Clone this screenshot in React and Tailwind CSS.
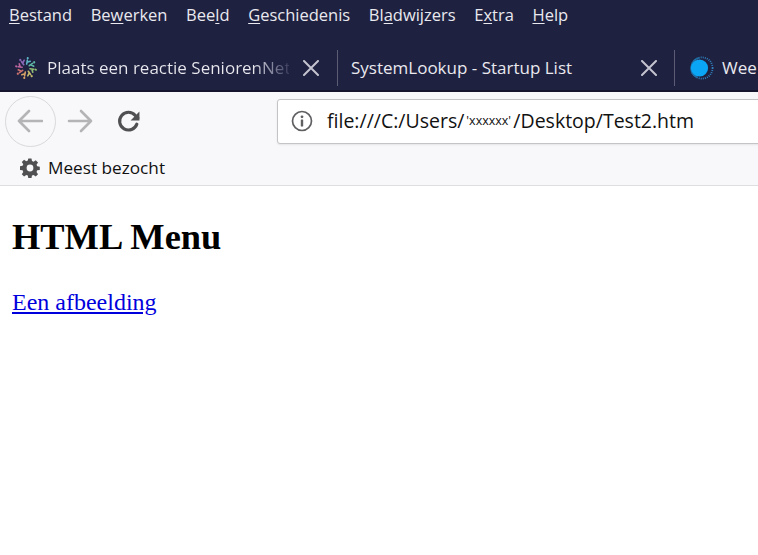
import React from 'react';

const UI_FONT = "font-['Noto_Sans',sans-serif]";

// Menu labels, with the access key underlined
const MENU = [
  ['', 'B', 'estand'],
  ['Be', 'w', 'erken'],
  ['Bee', 'l', 'd'],
  ['', 'G', 'eschiedenis'],
  ['Bl', 'a', 'dwijzers'],
  ['E', 'x', 'tra'],
  ['', 'H', 'elp'],
];

const CloseIcon = () => (
  <svg width="16" height="16" viewBox="0 0 16 16" className="shrink-0">
    <path d="M1 1 L15 15 M15 1 L1 15" stroke="#c3c4d0" strokeWidth="2" strokeLinecap="round" />
  </svg>
);

// SeniorenNet favicon: ring of small coloured branches
const SeniorenIcon = () => {
  const colors = ['#5cb4c4', '#5fb7a4', '#8fbb72', '#c6bd6c', '#d6a266', '#c9716e', '#b865a0', '#8b68b8'];
  return (
    <svg width="24" height="24" viewBox="0 0 24 24" className="shrink-0">
      {colors.map((c, i) => (
        <g key={c} transform={`rotate(${i * 45 + 10} 12 12)`}>
          <path d="M12 8 L12 4 M12 6.2 L15 4.6" stroke={c} strokeWidth="1.6" strokeLinecap="round" fill="none" />
          <circle cx="12" cy="2" r="1.1" fill={c} />
        </g>
      ))}
    </svg>
  );
};

const WeatherIcon = () => (
  <svg width="24" height="24" viewBox="0 0 24 24" className="shrink-0">
    <circle cx="12" cy="12" r="10.6" fill="none" stroke="#2f7fbc" strokeWidth="1.8" strokeDasharray="1 1.1" />
    <path d="M7 21.5 A10.6 10.6 0 0 1 9 1.8" fill="none" stroke="#1e6ea8" strokeWidth="1.6" />
    <circle cx="9.5" cy="12" r="8.6" fill="#0aa5f5" />
  </svg>
);

function App() {
  return (
    <div className={`w-[758px] h-[555px] overflow-hidden bg-white ${UI_FONT}`}>
      {/* Menu bar */}
      <div className="h-[46px] bg-[#1f2140] flex items-start pl-[9px] pt-[6px] gap-[18.6px] text-[16.5px] text-[#e9e9ef] font-['Open_Sans',sans-serif]">
        {MENU.map(([a, key, b]) => (
          <span key={a + key + b} className="whitespace-nowrap leading-[17px]">
            {a}
            <span className="underline underline-offset-2">{key}</span>
            {b}
          </span>
        ))}
      </div>

      {/* Tab strip */}
      <div className="h-[46px] bg-[#1f2140] border-b-2 border-[#15162e] flex items-center overflow-hidden text-[17px] text-[#e9e9ef] font-['Open_Sans',sans-serif] whitespace-nowrap">
        <div className="w-[337px] h-full shrink-0 flex items-center pl-[14px]">
          <SeniorenIcon />
          <span className="ml-[9px] w-[242px] overflow-hidden bg-linear-to-r from-[#e9e9ef] from-[85%] to-[#3b3d5c] bg-clip-text text-transparent">
            Plaats een reactie SeniorenNet
          </span>
          <span className="ml-[14px]"><CloseIcon /></span>
        </div>
        <div className="w-px h-[36px] bg-[#5c5d75] shrink-0" />
        <div className="w-[336px] h-full shrink-0 flex items-center pl-[13px]">
          <span className="w-[290px]">SystemLookup - Startup List</span>
          <CloseIcon />
        </div>
        <div className="w-px h-[36px] bg-[#5c5d75] shrink-0" />
        <div className="h-full flex items-center pl-[15px]">
          <WeatherIcon />
          <span className="ml-[8px]">Wee</span>
        </div>
      </div>

      {/* Navigation toolbar */}
      <div className="h-[56px] pt-[2px] bg-[#f8f8fa] flex items-center overflow-hidden">
        <div className="ml-[5px] w-[51px] h-[51px] rounded-full border border-[#d9d9dc] bg-[#f8f8fa] flex items-center justify-center shrink-0">
          <svg width="26" height="24" viewBox="0 0 26 24" className="-ml-[2px]">
            <path d="M25 12 H2 M12 2 L2 12 L12 22" fill="none" stroke="#b4b4b6" strokeWidth="2.6" strokeLinecap="round" strokeLinejoin="round" />
          </svg>
        </div>
        <svg width="26" height="24" viewBox="0 0 26 24" className="ml-[11px] shrink-0">
          <path d="M2 12 H24 M14 2 L24 12 L14 22" fill="none" stroke="#b4b4b6" strokeWidth="2.6" strokeLinecap="round" strokeLinejoin="round" />
        </svg>
        <svg width="25" height="25" viewBox="0 0 24 24" className="ml-[23px] shrink-0">
          <path d="M20 14.5 A8.5 8.5 0 1 1 18.5 6.2 L21 8.8" fill="none" stroke="#505053" strokeWidth="3" strokeLinecap="round" />
          <path d="M22.5 2.5 V11 H14 Z" fill="#505053" />
        </svg>
        <div className="ml-[136px] w-[520px] h-[45px] shrink-0 bg-white border border-[#c4c4c7] rounded-[3px] shadow-[0_1px_2px_rgba(0,0,0,0.08)] flex items-center pl-[13px] text-[19.5px] text-[#111] font-['Open_Sans',sans-serif] whitespace-nowrap">
          <svg width="22" height="22" viewBox="0 0 22 22" className="shrink-0">
            <circle cx="11" cy="11" r="9.5" fill="none" stroke="#5f5f62" strokeWidth="1.7" />
            <circle cx="11" cy="6.8" r="1.4" fill="#5f5f62" />
            <rect x="9.8" y="9.5" width="2.4" height="7" rx="0.6" fill="#5f5f62" />
          </svg>
          <span className="ml-[14px]">file:///C:/Users/</span>
          <span className="text-[12.5px] ml-[2px] w-[47px]">'xxxxxx'</span>
          <span>/Desktop/Test2.htm</span>
        </div>
      </div>

      {/* Bookmarks bar */}
      <div className="h-[38px] pt-[2px] bg-[#f8f8fa] border-b border-[#dedee0] flex items-center pl-[20px] text-[17.2px] text-[#111] font-['Open_Sans',sans-serif]">
        <svg width="20" height="20" viewBox="0 0 20 20" className="shrink-0">
          <path
            d="M8.4 0.5h3.2l.5 2.6 1.6.7 2.2-1.5 2.3 2.3-1.5 2.2.7 1.6 2.6.5v3.2l-2.6.5-.7 1.6 1.5 2.2-2.3 2.3-2.2-1.5-1.6.7-.5 2.6H8.4l-.5-2.6-1.6-.7-2.2 1.5-2.3-2.3 1.5-2.2-.7-1.6-2.6-.5V8.4l2.6-.5.7-1.6-1.5-2.2 2.3-2.3 2.2 1.5 1.6-.7z"
            fill="#505053"
            transform="translate(0 -0.1) scale(0.99)"
          />
          <circle cx="10" cy="10" r="3.4" fill="#f8f8fa" />
        </svg>
        <span className="ml-[8px]">Meest bezocht</span>
      </div>

      {/* Page content */}
      <div className="pl-[12px] pt-[30px] font-['Liberation_Serif',serif] text-black">
        <h1 className="text-[36.4px] font-bold leading-[42px]">HTML Menu</h1>
        <p className="mt-[31px] text-[24px] leading-[27px]">
          <a href="#" className="text-[#0000dd] underline">Een afbeelding</a>
        </p>
      </div>
    </div>
  );
}

export default App;
